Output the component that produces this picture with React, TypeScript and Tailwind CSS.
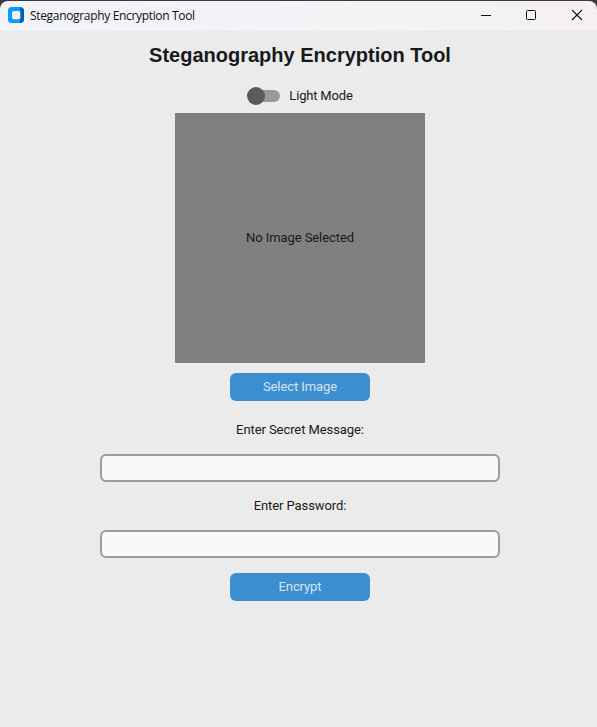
import type { ReactNode } from "react";

function AppIcon() {
  return (
    <svg width="16" height="16" viewBox="0 0 16 16" className="-mt-0.5 shrink-0">
      <rect width="16" height="16" rx="3.5" fill="#0a9bfb" />
      <path d="M12 0.3 L14 1 Q16 2 16 4 V12 Q16 15 13.5 15.7 L11.5 16 L12.5 12 V4 Z" fill="#0560a8" />
      <rect x="4" y="4" width="8.2" height="8.2" rx="1.8" fill="#f6f3f8" />
    </svg>
  );
}

function TitleBar() {
  return (
    <header className="flex h-[30px] items-center rounded-t-lg bg-linear-to-r from-[#f1f3f9] to-[#f5f1f2] pl-2">
      <AppIcon />
      <span className="ml-[6px] font-['Open_Sans','Noto_Sans',sans-serif] text-[12px] leading-4 tracking-[-0.33px] text-[#111] whitespace-nowrap">
        Steganography Encryption Tool
      </span>
      <div className="ml-auto flex h-full">
        <svg width="46" height="30" viewBox="0 0 46 30">
          <path d="M18 14.5H28" stroke="#111" />
        </svg>
        <svg width="45" height="30" viewBox="0 0 45 30">
          <rect x="17.5" y="9.5" width="9" height="9" rx="1" fill="none" stroke="#111" />
        </svg>
        <svg width="43" height="30" viewBox="0 0 43 30">
          <path d="M18 9L28 19M28 9L18 19" stroke="#111" strokeWidth="1.1" />
        </svg>
      </div>
    </header>
  );
}

function ActionButton({ children }: { children: ReactNode }) {
  return (
    <button className="h-7 w-[140px] rounded-md bg-[#3b8ed0] text-[13px] leading-7 tracking-[-0.08px] text-[#dce4ee]">
      {children}
    </button>
  );
}

function ModeSwitch() {
  return (
    <div className="mt-[17px] flex h-[24px] items-center">
      <svg width="34" height="18" viewBox="0 0 34 18">
        <rect x="3" y="3" width="30" height="12" rx="6" fill="#939ba2" />
        <circle cx="9" cy="9" r="9" fill="#5b5b5b" />
      </svg>
      <span className="ml-2 tracking-[-0.18px]">Light Mode</span>
    </div>
  );
}

const inputClass =
  "block h-7 w-[400px] rounded-md border-2 border-[#979da2] bg-[#f9f9fa] px-2 outline-none";

export default function App() {
  return (
    <div className="h-[727px] w-[597px] overflow-hidden bg-linear-to-b from-[#3c373d] from-0% via-[#3c373d] via-[20px] to-[#ebebeb] to-[21px] pt-px">
      <TitleBar />
      <main className="flex h-[696px] w-[600px] flex-col items-center bg-[#ebebeb] font-[Roboto,sans-serif] text-[13px] leading-4 tracking-[-0.08px] text-[#18191b]">
        <h1 className="mt-[12px] font-['Liberation_Sans',Arial,sans-serif] text-[20px] leading-6 font-bold tracking-normal whitespace-nowrap">
          Steganography Encryption Tool
        </h1>
        <ModeSwitch />
        <div className="mt-[5px] flex h-[250px] w-[250px] items-center justify-center bg-[#808080]">
          No Image Selected
        </div>
        <div className="mt-[10px] flex">
          <ActionButton>Select Image</ActionButton>
        </div>
        <label htmlFor="message" className="mt-[21px]">
          Enter Secret Message:
        </label>
        <input id="message" className={`${inputClass} mt-[16px]`} />
        <label htmlFor="password" className="mt-[16px]">
          Enter Password:
        </label>
        <input id="password" type="password" className={`${inputClass} mt-[16px]`} />
        <div className="mt-[15px] flex">
          <ActionButton>Encrypt</ActionButton>
        </div>
      </main>
    </div>
  );
}
